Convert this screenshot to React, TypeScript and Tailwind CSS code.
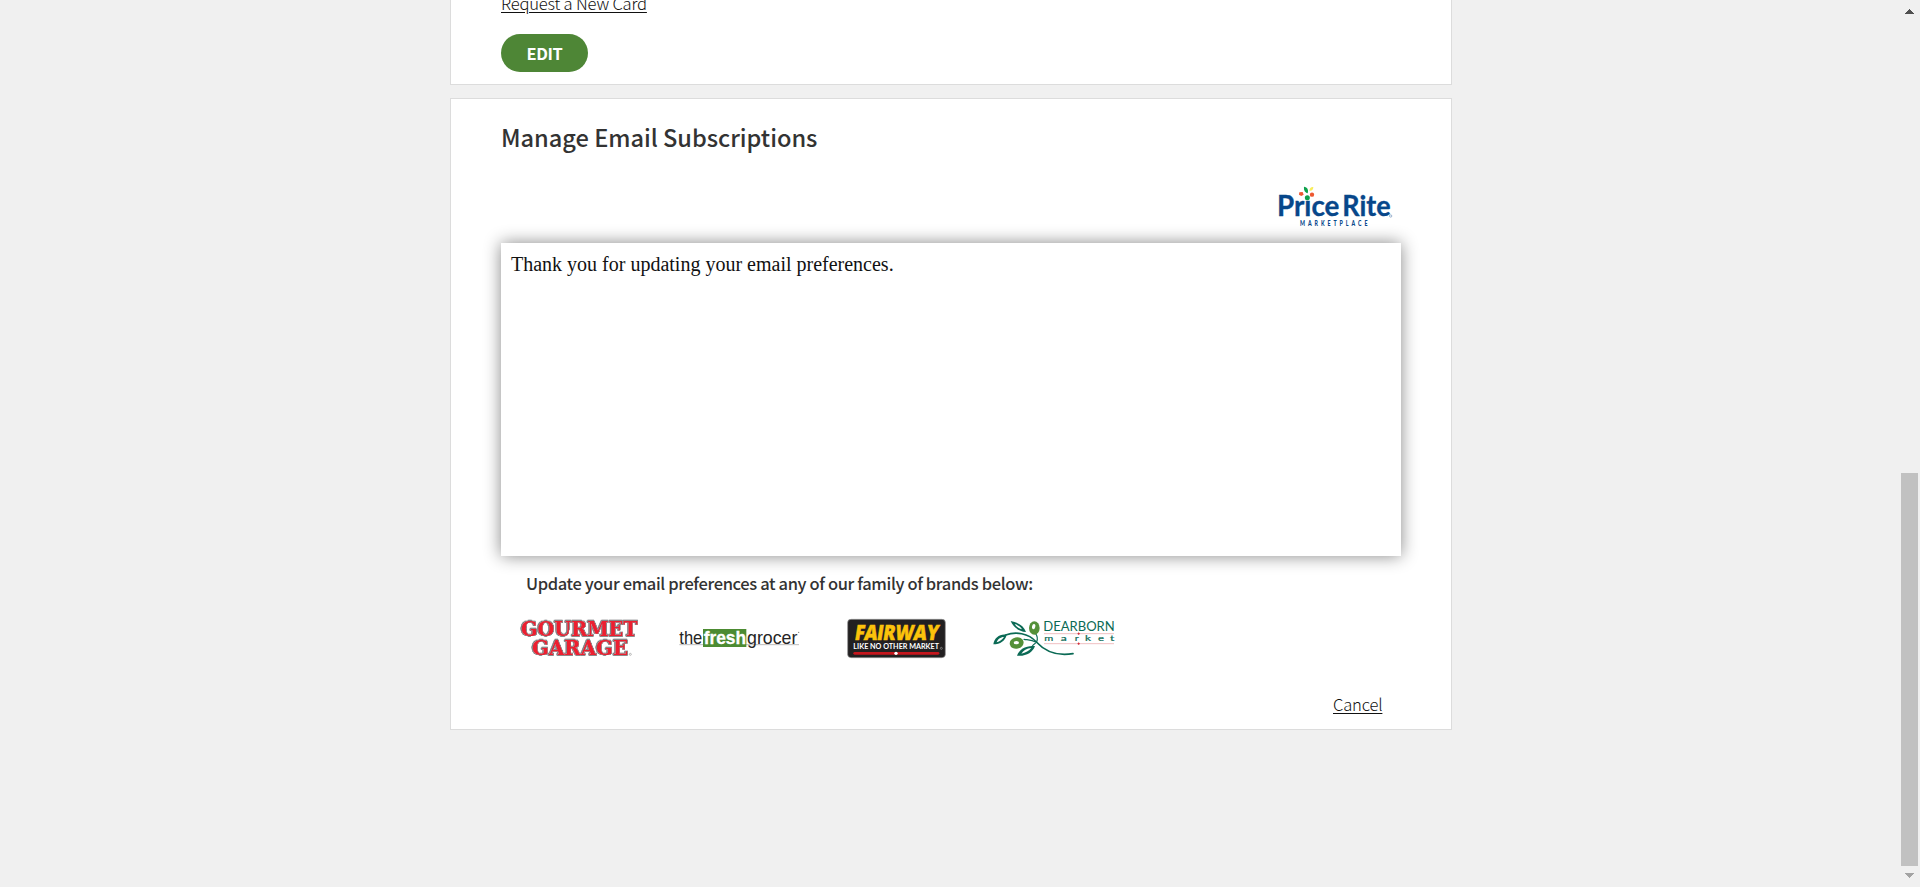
import React from "react";

function PriceRiteLogo() {
  return (
    <svg className="block h-[60px] w-[150px]" viewBox="0 0 450 180" role="img" aria-label="Price Rite Marketplace">
      <g fill="#07478a" fontFamily="Lato, sans-serif" fontWeight="700">
        <text x="21" y="107" fontSize="84" textLength="187" lengthAdjust="spacingAndGlyphs" stroke="#07478a" strokeWidth="1">Prıce</text>
        <text x="217" y="107" fontSize="84" textLength="145" lengthAdjust="spacingAndGlyphs" stroke="#07478a" strokeWidth="1">Rite</text>
        <text x="0" y="0" transform="translate(90 137) scale(0.75 1)" fontSize="21" fontWeight="900" textLength="270" lengthAdjust="spacing">MARKETPLACE</text>
        <circle cx="362" cy="108" r="3.5" fill="none" stroke="#6c90b8" strokeWidth="2" />
      </g>
      <circle cx="112" cy="53" r="7.5" fill="#0da14c" />
      <path d="M102 20c10 2 14 8 11 20c-9-4-12-9-11-20z" fill="#0da14c" />
      <path d="M118 32c1-8 5-12 12-11c0 8-4 12-12 11z" fill="#f8ed5b" />
      <path d="M88 37l10-1l3 8l-7 4l-7-4z" fill="#ee5830" />
      <circle cx="126" cy="44" r="6.5" fill="#ee5830" />
    </svg>
  );
}

function GourmetGarageLogo() {
  return (
    <svg className="block h-[55px] w-[150px]" viewBox="0 0 450 165" role="img" aria-label="Gourmet Garage">
      <g
        className="[filter:drop-shadow(0.6px_0_0_#4b4e51)_drop-shadow(-0.6px_0_0_#6a6d70)_drop-shadow(0_0.5px_0_#77797c)_drop-shadow(0_-0.5px_0_#77797c)]"
        fontFamily="DejaVu Serif, serif"
        fontWeight="700"
        fill="#ed1f30"
        stroke="#e6c9cd"
        strokeWidth="1.5"
        strokeLinejoin="round"
        paintOrder="stroke"
      >
        <text x="33" y="78" fontSize="60" textLength="350" lengthAdjust="spacingAndGlyphs">GOURMET</text>
        <text x="66" y="136" fontSize="60" textLength="288" lengthAdjust="spacingAndGlyphs">GARAGE</text>
      </g>
      <circle cx="361" cy="133" r="3" fill="none" stroke="#999" strokeWidth="2" />
    </svg>
  );
}

function FreshGrocerLogo() {
  return (
    <svg className="block h-[55px] w-[150px]" viewBox="0 0 450 165" role="img" aria-label="The Fresh Grocer">
      <path d="M28 104H387" stroke="#9a9a9a" strokeWidth="2" />
      <rect x="99" y="57" width="130" height="54" fill="#4c8b32" />
      <g fontFamily="Liberation Sans, sans-serif" fontSize="57">
        <text x="28" y="103" fill="#252525" textLength="69" lengthAdjust="spacingAndGlyphs">the</text>
        <text x="101" y="103" fill="#fff" stroke="#fff" strokeWidth="1" fontWeight="700" textLength="127" lengthAdjust="spacingAndGlyphs">fresh</text>
        <text x="231" y="103" fill="#252525" textLength="151" lengthAdjust="spacingAndGlyphs">grocer</text>
      </g>
      <circle cx="386" cy="67" r="2" fill="#777" />
    </svg>
  );
}

function FairwayLogo() {
  return (
    <svg className="block h-[55px] w-[130px]" viewBox="0 0 390 165" role="img" aria-label="Fairway, like no other market">
      <rect x="38" y="28" width="293" height="115" rx="10" fill="#222021" stroke="#929292" strokeWidth="2" />
      <text x="0" y="0" transform="translate(57 89) skewX(-9) scale(0.86 1)" fontFamily="Open Sans, sans-serif" fontSize="63" fontWeight="800" fill="#fcc30b" stroke="#fcc30b" strokeWidth="1.5" textLength="292" lengthAdjust="spacing">FAIRWAY</text>
      <text x="55" y="118" fontFamily="Lato, sans-serif" fontSize="21" fontWeight="700" fill="#fff" textLength="257" lengthAdjust="spacingAndGlyphs">LIKE NO OTHER MARKET</text>
      <circle cx="319" cy="115" r="3" fill="none" stroke="#bbb" strokeWidth="1.5" />
      <path d="M59 130H309" stroke="#c5161d" strokeWidth="8" strokeLinecap="round" />
      <circle cx="183" cy="130" r="5" fill="#fff" />
    </svg>
  );
}

function DearbornLogo() {
  const market: [string, number, number][] = [
    ["m", 193, 27],
    ["a", 242, 18],
    ["r", 284, 12],
    ["k", 315, 18],
    ["e", 354, 18],
    ["t", 390, 13],
  ];
  return (
    <svg className="block h-[55px] w-[150px]" viewBox="0 0 450 165" role="img" aria-label="Dearborn Market">
      <g fill="none" stroke="#0b6a55" strokeLinecap="round">
        <path d="M77 75C107 64 145 69 169 96C194 123 227 140 279 131" strokeWidth="5" />
        <path d="M170 95C174 85 172 77 166 70M169 97C155 89 148 90 132 88M166 100C160 104 157 108 154 112" strokeWidth="3.5" />
      </g>
      <path d="M80 74C61 70 43 82 40 103C61 103 76 92 80 74zM72 81C67 89 60 94 50 97C53 88 61 81 72 81z" fill="#0b6a55" fillRule="evenodd" />
      <path d="M92 33C116 37 132 48 138 66C116 64 99 51 92 33zM104 42C109 50 117 55 126 58C122 50 115 45 104 42z" fill="#0b6a55" fillRule="evenodd" />
      <path d="M165 108C137 106 118 117 111 137C137 140 158 128 165 108zM154 114C147 123 137 128 124 131C130 121 140 115 154 114z" fill="#0b6a55" fillRule="evenodd" />
      <ellipse cx="110" cy="99" rx="21" ry="17" fill="#549038" transform="rotate(-12 110 99)" />
      <ellipse cx="109" cy="98" rx="8" ry="5" fill="#fff" />
      <ellipse cx="163" cy="54" rx="16" ry="20" fill="#549038" />
      <ellipse cx="161" cy="50" rx="5" ry="8" fill="#fff" transform="rotate(15 161 50)" />
      <g fontFamily="Lato, sans-serif" fill="#0b6a55">
        <text x="190" y="62" fontSize="42" textLength="214" lengthAdjust="spacingAndGlyphs">DEARBORN</text>
        {market.map(([c, x, w]) => (
          <text key={c} x={x} y="93" fontSize="25" stroke="#0b6a55" strokeWidth="0.6" textLength={w} lengthAdjust="spacingAndGlyphs">{c}</text>
        ))}
      </g>
      <path d="M192 71H402M192 101H402" stroke="#e9a0a4" strokeWidth="2" />
      <path d="M296 67l4 4l-4 4l-4-4zM296 97l4 4l-4 4l-4-4z" fill="#d2333d" />
    </svg>
  );
}

export default function App() {
  return (
    <div className="flex h-[887px] w-full overflow-hidden bg-[#f0f0f0] font-['Noto_Sans_CJK_SC',sans-serif] text-[#333]">
      <main className="flex grow flex-col pl-[450px]">
        <section className="h-[85px] w-[1002px] border border-t-0 border-[#dcdcdc] bg-white pl-[50px]">
          <a className="-mt-[9px] block h-[24px] w-fit text-[16.6px] leading-[24px] font-light tracking-[-0.2px] whitespace-nowrap text-[#111] underline underline-offset-2" href="#card">
            Request a New Card
          </a>
          <button className="mt-[19px] flex h-[38px] w-[87px] items-center justify-center rounded-full bg-[#4e8636] pb-px text-[16.4px] leading-[24px] font-bold tracking-[-0.4px] text-white">
            EDIT
          </button>
        </section>

        <section className="mt-[13px] flex h-[632px] w-[1002px] flex-col border border-[#dcdcdc] bg-white px-[50px]">
          <h2 className="mt-[18px] h-[40px] text-[23.6px] leading-[40px] font-medium tracking-[-0.03px] whitespace-nowrap">Manage Email Subscriptions</h2>
          <div className="mt-[23px] ml-[769px] h-[63px]">
            <PriceRiteLogo />
          </div>
          <div className="h-[313px] w-[900px] shrink-0 bg-white pt-[9px] pl-[10px] font-['Liberation_Serif',serif] text-[20px] leading-[24px] text-[#111] shadow-[0_0_16px_#888]">
            Thank you for updating your email preferences.
          </div>
          <p className="mt-[14px] h-[26px] pl-[25px] text-[16.5px] leading-[26px] font-medium tracking-[-0.37px] whitespace-nowrap">
            Update your email preferences at any of our family of brands below:
          </p>
          <div className="mt-[14px] ml-[9px] flex h-[55px]">
            <GourmetGarageLogo />
            <div className="ml-[10px]"><FreshGrocerLogo /></div>
            <div className="ml-[15px]"><FairwayLogo /></div>
            <div className="ml-[15px]"><DearbornLogo /></div>
          </div>
          <a className="mt-[27px] ml-[832px] block h-[24px] w-fit text-[16.6px] leading-[24px] font-light tracking-[-0.2px] text-[#111] underline underline-offset-2" href="#cancel">
            Cancel
          </a>
        </section>
      </main>

      <div className="flex w-[19px] shrink-0 flex-col pt-[9px]">
        <svg className="ml-[4px] block h-[5px] w-[9px]" viewBox="0 0 9 5" shapeRendering="crispEdges">
          <path d="M4 0h1v1h1v1h1v1h1v1h1v1H0V4h1V3h1V2h1V1h1z" fill="#505050" />
        </svg>
        <div className="mt-[459px] h-[393px] w-[17px] bg-[#c1c1c1]" />
        <svg className="mt-[7px] ml-[4px] block h-[5px] w-[9px]" viewBox="0 0 9 5" shapeRendering="crispEdges">
          <path d="M0 0h9v1h-1v1h-1v1h-1v1h-1v1h-1v-1h-1v-1h-1v-1h-1v-1h-1z" fill="#a3a3a3" />
        </svg>
      </div>
    </div>
  );
}
